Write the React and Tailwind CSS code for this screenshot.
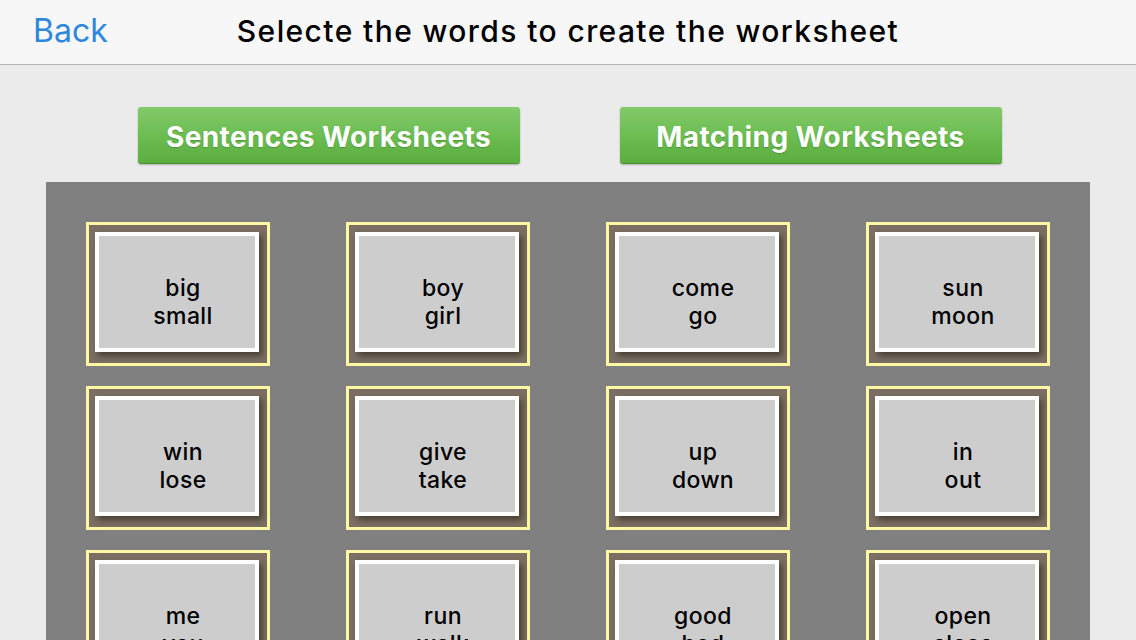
import React from "react";

const pairs = [
    ["big", "small"],
    ["boy", "girl"],
    ["come", "go"],
    ["sun", "moon"],
    ["win", "lose"],
    ["give", "take"],
    ["up", "down"],
    ["in", "out"],
    ["me", "you"],
    ["run", "walk"],
    ["good", "bad"],
    ["open", "close"],
];

function WordCard({ top, bottom }) {
    return (
        <div className="w-[184px] h-[144px] border-[3px] border-[#fdf8a4] bg-[#7a6f62] pt-[7px] pl-[6px] pr-[8px] pb-[11px]">
            <div className="w-full h-full border-[4px] border-white bg-[#cdcdcd] shadow-[3px_4px_6px_rgba(40,30,20,0.6)] flex flex-col items-center justify-center pl-[12px] pt-[20px] text-[23px] leading-[28px] font-medium tracking-[0.4px] text-black">
                <span>{top}</span>
                <span>{bottom}</span>
            </div>
        </div>
    );
}

function GreenButton({ label }) {
    return (
        <button className="w-[382px] h-[57px] pt-[3px] rounded-[3px] bg-gradient-to-b from-[#84ca6a] via-[#6cbd52] to-[#5aae3e] border-b border-[#4a8f33] shadow-[0_1px_2px_rgba(0,0,0,0.25)] text-white text-[28px] font-bold tracking-[0.4px] [text-shadow:0_1px_1px_rgba(0,0,0,0.2)]">
            {label}
        </button>
    );
}

export default function App() {
    return (
        <div
            className="w-[1136px] h-[640px] overflow-hidden bg-[#ebebeb] flex flex-col"
            style={{ fontFamily: "Inter, 'Liberation Sans', sans-serif" }}
        >
            {/* header bar */}
            <div className="h-[65px] shrink-0 bg-[#f7f7f7] border-b border-[#b4b4b4] flex items-center relative">
                <span className="pl-[33px] pb-[2px] text-[32px] text-[#2d87dc] font-normal">Back</span>
                <span className="absolute left-0 right-0 pb-[2px] text-center text-[30px] font-medium tracking-[1.4px] text-black pointer-events-none">
                    Selecte the words to create the worksheet
                </span>
            </div>

            <div className="flex justify-center gap-[100px] pt-[42px] pl-[3px]">
                <GreenButton label="Sentences Worksheets" />
                <GreenButton label="Matching Worksheets" />
            </div>

            <div className="mt-[18px] ml-[46px] w-[1044px] flex-1 bg-[#808080] px-[40px] pt-[40px]">
                <div className="grid grid-cols-4 gap-x-[76px] gap-y-[20px]">
                    {pairs.map((p, i) => (
                        <WordCard key={i} top={p[0]} bottom={p[1]} />
                    ))}
                </div>
            </div>
        </div>
    );
}
